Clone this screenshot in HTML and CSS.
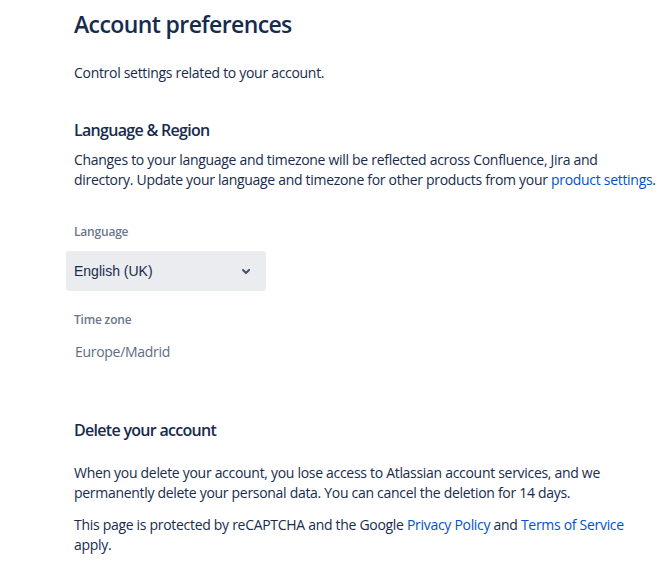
FILE: index.html
```html
<!DOCTYPE html>
<html lang="en">
<head>
<meta charset="utf-8">
<title>Account preferences</title>
<link rel="stylesheet" href="styles.css">
</head>
<body>
<main class="page">
  <h1 class="title">Account preferences</h1>
  <p class="intro">Control settings related to your account.</p>

  <section class="section">
    <h2 class="section-title">Language &amp; Region</h2>
    <p class="desc">Changes to your language and timezone will be reflected across Confluence, Jira and<br>directory. Update your language and timezone for other products from your <a class="link" href="#">product settings</a>.</p>

    <div class="field">
      <div class="label">Language</div>
      <div class="select">
        <span class="select-value">English (UK)</span>
        <svg class="chevron" width="24" height="24" viewBox="0 0 24 24" aria-hidden="true"><path d="M8.3 10.3a1 1 0 0 1 1.4 0L12 12.6l2.3-2.3a1 1 0 1 1 1.4 1.4l-3 3a1 1 0 0 1-1.4 0l-3-3a1 1 0 0 1 0-1.4z" fill="#42526e"/></svg>
      </div>
    </div>

    <div class="field tz">
      <div class="label">Time zone</div>
      <div class="tz-value">Europe/Madrid</div>
    </div>
  </section>

  <section class="section delete">
    <h2 class="section-title">Delete your account</h2>
    <p class="desc delete-desc">When you delete your account, you lose access to Atlassian account services, and we<br>permanently delete your personal data. You can cancel the deletion for 14 days.</p>
    <p class="desc recaptcha">This page is protected by reCAPTCHA and the Google <a class="link" href="#">Privacy Policy</a> and <a class="link" href="#">Terms of Service</a><br>apply.</p>
  </section>
</main>
</body>
</html>
```

FILE: styles.css
```css
html, body {
  margin: 0;
  padding: 0;
  background: #ffffff;
}
body {
  font-family: "Open Sans", "Noto Sans", "Liberation Sans", sans-serif;
  color: #172b4d;
  font-size: 14px;
  line-height: 20px;
  letter-spacing: -0.3px;
}
.page {
  padding: 10px 0 0 74px;
}
.title {
  margin: 0;
  font-size: 23px;
  line-height: 28px;
  font-weight: 600;
  letter-spacing: -0.6px;
  color: #172b4d;
}
.intro {
  margin: 25px 0 0;
}
.section {
  margin-top: 37px;
}
.section-title {
  margin: 0;
  font-size: 16px;
  line-height: 20px;
  font-weight: 600;
  letter-spacing: -0.7px;
  color: #172b4d;
}
.desc {
  margin: 10px 0 0;
  white-space: nowrap;
}
.link {
  color: #0052cc;
  text-decoration: none;
}
.field {
  margin-top: 34px;
}
.field.tz {
  margin-top: 21px;
}
.label {
  font-size: 12px;
  line-height: 16px;
  font-weight: 600;
  letter-spacing: -0.2px;
  color: #6b778c;
}
.select {
  margin: 11px 0 0 -8px;
  width: 200px;
  height: 40px;
  box-sizing: border-box;
  background: #ebecf0;
  border-radius: 3px;
  display: flex;
  align-items: center;
  justify-content: space-between;
  padding: 0 8px;
}
.select-value {
  font-family: "Liberation Sans", Arial, sans-serif;
  font-size: 14px;
  letter-spacing: 0;
  color: #172b4d;
}
.chevron {
  display: block;
}
.tz-value {
  margin-top: 14px;
  padding-left: 1px;
  color: #5e6c84;
}
.section.delete {
  margin-top: 58px;
}
.delete-desc {
  margin-top: 23px;
}
.recaptcha {
  margin-top: 12px;
}
```
